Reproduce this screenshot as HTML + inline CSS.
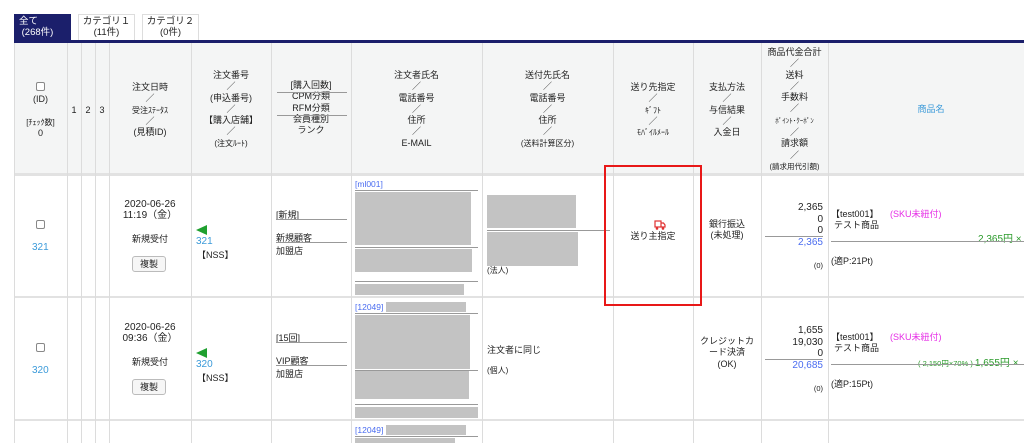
<!DOCTYPE html>
<html><head><meta charset="utf-8"><style>
*{margin:0;padding:0;box-sizing:border-box}
body{width:1024px;height:443px;overflow:hidden;background:#fff;font-family:"Liberation Sans","Noto Sans CJK JP",sans-serif;color:#222;position:relative;font-size:9px}
.a{position:absolute;white-space:nowrap}
.c{position:absolute;text-align:center;line-height:11.3px;font-size:9px}
.v{position:absolute;top:43px;width:1px;height:400px;background:#dcdcdc}
.h{position:absolute;height:1px;background:#999}
.g{position:absolute;background:#c3c3c3}
.blue{color:#3b9ad9}
.lb{color:#4a6cf0}
.tab{position:absolute;top:14px;height:27px;border:1px solid #ddd;border-bottom:none;text-align:center;font-size:9.5px;line-height:10.5px;padding-top:2px}
.rowl{position:absolute;left:14px;width:1010px;height:2px;background:#e2e2e2}
.cb{position:absolute;width:9px;height:9px;border:1px solid #888;border-radius:2px;background:#fff}
.fs10{font-size:10px}
</style></head><body>
<div class="tab" style="left:14px;width:57px;background:#1b1f6b;color:#fff;border-color:#1b1f6b;text-align:left;padding-left:4px">全て<br>&nbsp;(268件)</div>
<div class="tab" style="left:78px;width:57px">カテゴリ１<br>(11件)</div>
<div class="tab" style="left:142px;width:57px">カテゴリ２<br>(0件)</div>
<div style="position:absolute;left:14px;top:40px;width:1010px;height:3px;background:#1b1f6b"></div>
<div style="position:absolute;left:14px;top:43px;width:1010px;height:130px;background:#f4f5f5"></div>
<div class="rowl" style="top:173px;height:3px"></div>
<div class="rowl" style="top:296px"></div>
<div class="rowl" style="top:419px"></div>
<div class="v" style="left:14px"></div><div class="v" style="left:67px"></div><div class="v" style="left:81px"></div><div class="v" style="left:95px"></div><div class="v" style="left:109px"></div><div class="v" style="left:191px"></div><div class="v" style="left:271px"></div><div class="v" style="left:351px"></div><div class="v" style="left:482px"></div><div class="v" style="left:613px"></div><div class="v" style="left:693px"></div><div class="v" style="left:761px"></div><div class="v" style="left:828px"></div>

<!-- header -->
<div class="cb" style="left:36px;top:82px"></div>
<div class="c" style="left:14px;width:53px;top:94px">(ID)</div>
<div class="c" style="left:14px;width:53px;top:117px;font-size:8px">[ﾁｪｯｸ数]<br><span style="font-size:9px">0</span></div>
<div class="c" style="left:67px;width:14px;top:105px">1</div>
<div class="c" style="left:81px;width:14px;top:105px">2</div>
<div class="c" style="left:95px;width:14px;top:105px">3</div>
<div class="c" style="left:109px;width:82px;top:82px">注文日時<br>／<br><span style="font-size:8px">受注ｽﾃｰﾀｽ</span><br>／<br>(見積ID)</div>
<div class="c" style="left:191px;width:80px;top:70px">注文番号<br>／<br>(申込番号)<br>／<br>【購入店舗】<br>／<br><span style="font-size:8px">(注文ﾙｰﾄ)</span></div>
<div class="c" style="left:271px;width:80px;top:80px">[購入回数]<br>CPM分類<br>RFM分類<br>会員種別<br>ランク</div>
<div class="h" style="left:277px;top:92px;width:70px"></div><div class="h" style="left:277px;top:115px;width:70px"></div>
<div class="c" style="left:351px;width:131px;top:70px">注文者氏名<br>／<br>電話番号<br>／<br>住所<br>／<br>E-MAIL</div>
<div class="c" style="left:482px;width:131px;top:70px">送付先氏名<br>／<br>電話番号<br>／<br>住所<br>／<br><span style="font-size:8px">(送料計算区分)</span></div>
<div class="c" style="left:613px;width:80px;top:82px">送り先指定<br>／<br><span style="font-size:8px">ｷﾞﾌﾄ</span><br>／<br><span style="font-size:8px">ﾓﾊﾞｲﾙﾒｰﾙ</span></div>
<div class="c" style="left:693px;width:68px;top:82px">支払方法<br>／<br>与信結果<br>／<br>入金日</div>
<div class="c" style="left:761px;width:67px;top:47px">商品代金合計<br>／<br>送料<br>／<br>手数料<br>／<br><span style="font-size:7px">ﾎﾟｲﾝﾄ･ｸｰﾎﾟﾝ</span><br>／<br>請求額<br>／<br><span style="font-size:7.5px">(請求用代引額)</span></div>
<div class="c blue" style="left:828px;width:206px;top:104px">商品名</div>

<!-- row1 -->
<div class="cb" style="left:36px;top:220px"></div>
<div class="a blue fs10" style="left:32px;top:242px">321</div>
<div class="c fs10" style="left:109px;width:82px;top:199px">2020-06-26<br>11:19（金）</div>
<div class="c" style="left:109px;width:82px;top:234px">新規受付</div>
<div class="c" style="left:132px;top:256px;width:34px;height:16px;border:1px solid #bbb;border-radius:3px;background:#f6f6f6;line-height:14px">複製</div>
<svg class="a" style="left:196px;top:225px" width="12" height="10"><path d="M0 5L11 0V10Z" fill="#1fa02f"/></svg>
<div class="a blue fs10" style="left:196px;top:236px">321</div>
<div class="a" style="left:197px;top:248px">【NSS】</div>
<div class="a" style="left:276px;top:208px">[新規]</div><div class="h" style="left:276px;top:219px;width:71px"></div>
<div class="a" style="left:276px;top:231px">新規顧客</div><div class="h" style="left:276px;top:242px;width:71px"></div>
<div class="a" style="left:276px;top:244px">加盟店</div>
<div class="a lb" style="left:355px;top:179px;font-size:8.5px">[ml001]</div>
<div class="h" style="left:355px;top:190px;width:123px"></div>
<div class="g" style="left:355px;top:192px;width:116px;height:53px"></div>
<div class="h" style="left:355px;top:247px;width:123px"></div>
<div class="g" style="left:355px;top:249px;width:117px;height:23px"></div>
<div class="h" style="left:355px;top:281px;width:123px"></div>
<div class="g" style="left:355px;top:284px;width:109px;height:11px"></div>
<div class="g" style="left:487px;top:195px;width:89px;height:33px"></div>
<div class="h" style="left:487px;top:230px;width:123px"></div>
<div class="g" style="left:487px;top:232px;width:91px;height:34px"></div>
<div class="a" style="left:487px;top:265px;font-size:8px">(法人)</div>
<svg class="a" style="left:654px;top:220px" width="12" height="11"><rect x="1" y="1" width="6" height="6" fill="none" stroke="#e03030" stroke-width="1.2"/><path d="M7 3h2.5l1.5 2v2H7" fill="none" stroke="#e03030" stroke-width="1.2"/><circle cx="3" cy="8.5" r="1.3" fill="#e03030"/><circle cx="9" cy="8.5" r="1.3" fill="#e03030"/></svg>
<div class="c" style="left:613px;width:80px;top:231px">送り主指定</div>
<div class="c" style="left:693px;width:68px;top:219px">銀行振込<br>(未処理)</div>
<div class="a fs10" style="right:201px;top:202px;text-align:right;line-height:11.5px">2,365<br>0<br>0<br><span class="lb">2,365</span></div>
<div class="h" style="left:765px;top:236px;width:58px"></div>
<div class="a" style="right:201px;top:261px;font-size:7.5px">(0)</div>
<div class="a" style="left:831px;top:207px">【test001】</div>
<div class="a" style="left:890px;top:207px;color:#e62ee6">(SKU未紐付)</div>
<div class="a" style="left:834px;top:218px">テスト商品</div>
<div class="a fs10" style="left:978px;top:230px;color:#2a9a2a">2,365円 ×</div>
<div class="h" style="left:831px;top:241px;width:193px"></div>
<div class="a" style="left:831px;top:254px">(適P:21Pt)</div>

<!-- row2 -->
<div class="cb" style="left:36px;top:343px"></div>
<div class="a blue fs10" style="left:32px;top:365px">320</div>
<div class="c fs10" style="left:109px;width:82px;top:322px">2020-06-26<br>09:36（金）</div>
<div class="c" style="left:109px;width:82px;top:357px">新規受付</div>
<div class="c" style="left:132px;top:379px;width:34px;height:16px;border:1px solid #bbb;border-radius:3px;background:#f6f6f6;line-height:14px">複製</div>
<svg class="a" style="left:196px;top:348px" width="12" height="10"><path d="M0 5L11 0V10Z" fill="#1fa02f"/></svg>
<div class="a blue fs10" style="left:196px;top:359px">320</div>
<div class="a" style="left:197px;top:371px">【NSS】</div>
<div class="a" style="left:276px;top:331px">[15回]</div><div class="h" style="left:276px;top:342px;width:71px"></div>
<div class="a" style="left:276px;top:354px">VIP顧客</div><div class="h" style="left:276px;top:365px;width:71px"></div>
<div class="a" style="left:276px;top:367px">加盟店</div>
<div class="a lb" style="left:355px;top:302px;font-size:8.5px">[12049]</div>
<div class="g" style="left:386px;top:302px;width:80px;height:10px"></div>
<div class="h" style="left:355px;top:313px;width:123px"></div>
<div class="g" style="left:355px;top:315px;width:115px;height:54px"></div>
<div class="h" style="left:355px;top:370px;width:123px"></div>
<div class="g" style="left:355px;top:371px;width:114px;height:28px"></div>
<div class="h" style="left:355px;top:404px;width:123px"></div>
<div class="g" style="left:355px;top:407px;width:123px;height:11px"></div>
<div class="a" style="left:487px;top:343px">注文者に同じ</div>
<div class="a" style="left:487px;top:365px;font-size:8px">(個人)</div>
<div class="c" style="left:693px;width:68px;top:336px">クレジットカ<br>ード決済<br>(OK)</div>
<div class="a fs10" style="right:201px;top:325px;text-align:right;line-height:11.5px">1,655<br>19,030<br>0<br><span class="lb">20,685</span></div>
<div class="h" style="left:765px;top:359px;width:58px"></div>
<div class="a" style="right:201px;top:384px;font-size:7.5px">(0)</div>
<div class="a" style="left:831px;top:330px">【test001】</div>
<div class="a" style="left:890px;top:330px;color:#e62ee6">(SKU未紐付)</div>
<div class="a" style="left:834px;top:341px">テスト商品</div>
<div class="a" style="left:918px;top:354px;color:#2a9a2a;font-size:7.5px">( 2,150円×70% ) <span style="font-size:10px">1,655円 ×</span></div>
<div class="h" style="left:831px;top:364px;width:193px"></div>
<div class="a" style="left:831px;top:377px">(適P:15Pt)</div>

<!-- row3 -->
<div class="a lb" style="left:355px;top:425px;font-size:8.5px">[12049]</div>
<div class="g" style="left:386px;top:425px;width:80px;height:10px"></div>
<div class="h" style="left:355px;top:436px;width:123px"></div>
<div class="g" style="left:355px;top:438px;width:100px;height:5px"></div>

<!-- red box -->
<div style="position:absolute;left:604px;top:165px;width:98px;height:141px;border:2px solid #e81818"></div>
</body></html>
